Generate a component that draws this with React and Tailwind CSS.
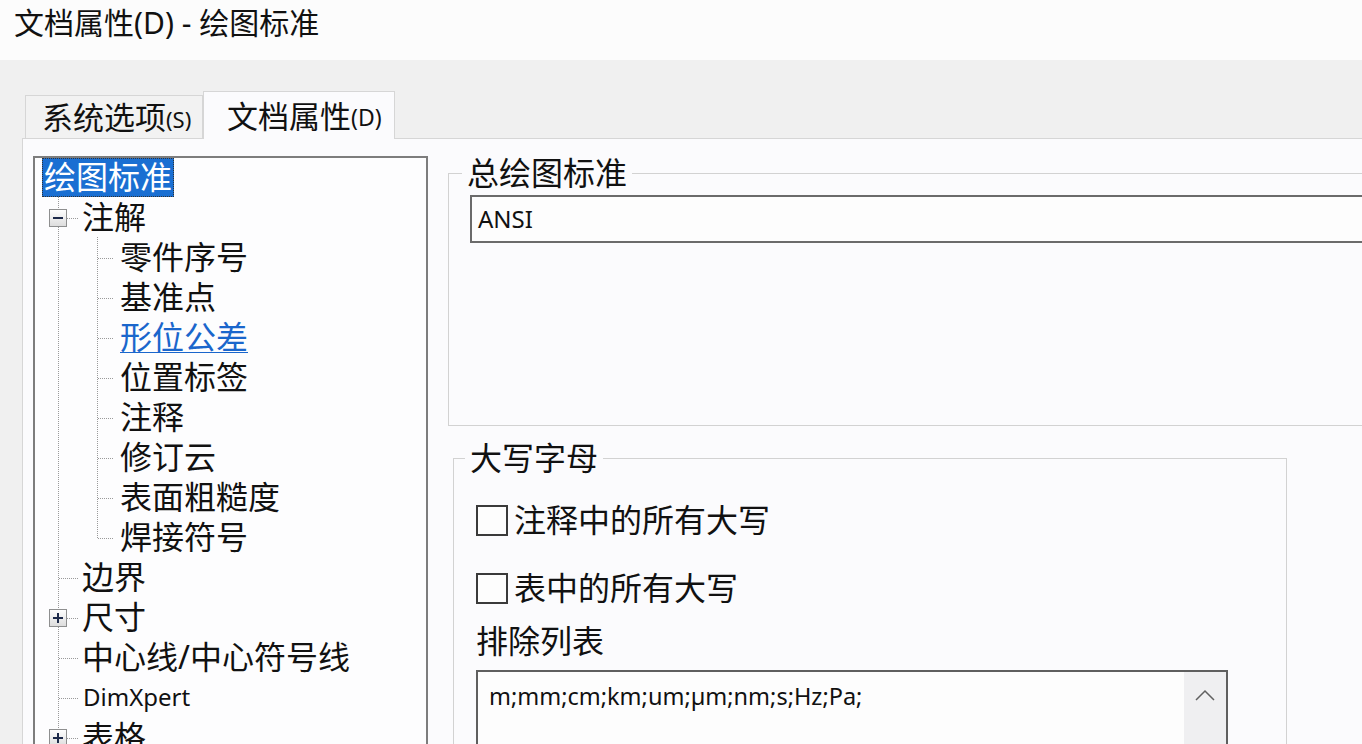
import React from 'react'

const dot = { stroke: '#9a9a9a', strokeWidth: 1, strokeDasharray: '1 1' }

function Expander({ plus }) {
  return (
    <g>
      <defs>
        <linearGradient id="exp" x1="0" y1="0" x2="0" y2="1">
          <stop offset="0" stopColor="#ffffff" />
          <stop offset="1" stopColor="#dcdcdc" />
        </linearGradient>
      </defs>
      <rect x="14.5" y="12.5" width="17" height="17" fill="url(#exp)" stroke="#8e8f8f" />
      <line x1="18" y1="21" x2="28" y2="21" stroke="#1d2a4a" strokeWidth="2" />
      {plus && <line x1="23" y1="16" x2="23" y2="26" stroke="#1d2a4a" strokeWidth="2" />}
    </g>
  )
}

function Prefix({ kind }) {
  if (kind === 'child' || kind === 'last') {
    return (
      <svg width="85" height="40" className="shrink-0">
        <line x1="23.5" y1="0" x2="23.5" y2="40" style={dot} />
        <line x1="62.5" y1="0" x2="62.5" y2={kind === 'last' ? 21 : 40} style={dot} />
        <line x1="63" y1="21.5" x2="78" y2="21.5" style={dot} />
      </svg>
    )
  }
  const box = kind === 'minus' || kind === 'plus'
  return (
    <svg width="47" height="40" className="shrink-0">
      {box ? (
        <>
          <line x1="23.5" y1="0" x2="23.5" y2="12" style={dot} />
          <line x1="23.5" y1="30" x2="23.5" y2="40" style={dot} />
          <line x1="32" y1="21.5" x2="44" y2="21.5" style={dot} />
          <Expander plus={kind === 'plus'} />
        </>
      ) : (
        <>
          <line x1="23.5" y1="0" x2="23.5" y2="40" style={dot} />
          <line x1="24" y1="21.5" x2="44" y2="21.5" style={dot} />
        </>
      )}
    </svg>
  )
}

const rows = [
  { kind: 'minus', text: '注解' },
  { kind: 'child', text: '零件序号' },
  { kind: 'child', text: '基准点' },
  { kind: 'child', text: '形位公差', link: true },
  { kind: 'child', text: '位置标签' },
  { kind: 'child', text: '注释' },
  { kind: 'child', text: '修订云' },
  { kind: 'child', text: '表面粗糙度' },
  { kind: 'last', text: '焊接符号' },
  { kind: 'leaf', text: '边界' },
  { kind: 'plus', text: '尺寸' },
  { kind: 'leaf', text: '中心线/中心符号线' },
  { kind: 'leaf', text: 'DimXpert', small: true },
  { kind: 'plus', text: '表格' },
  { kind: 'leaf', text: '视图' },
]

function Tree() {
  return (
    <div className="mt-[17px] ml-[10px] w-[395px] h-[620px] shrink-0 border-2 border-[#7d7d7d] bg-[#fdfdfe] overflow-hidden">
      <div className="h-[39px] flex items-center pl-[7px]">
        <span className="h-[39px] px-[2px] bg-[#1a6fd2] text-white text-[32px] leading-[38px] outline-1 outline-dotted outline-[#333] -outline-offset-1">
          绘图标准
        </span>
      </div>
      {rows.map((r, i) => (
        <div key={i} className="h-[40px] flex items-start">
          <Prefix kind={r.kind} />
          <span
            className={
              'whitespace-nowrap leading-[40px] ' +
              (r.small ? 'text-[24px] pl-[1px] ' : 'text-[32px] ') +
              (r.link ? 'text-[#1a66cc] underline decoration-1 underline-offset-[3px]' : 'text-[#111]')
            }
          >
            {r.text}
          </span>
        </div>
      ))}
    </div>
  )
}

function Checkbox({ label }) {
  return (
    <div className="h-[40px] flex items-center ml-[11px]">
      <span className="w-[32px] h-[31px] border-2 border-[#3a3a3a] bg-[#fdfdfd] shrink-0" />
      <span className="ml-[6px] text-[32px] leading-[40px] text-[#111] whitespace-nowrap">{label}</span>
    </div>
  )
}

export default function App() {
  return (
    <div className="w-[1362px] h-[744px] overflow-hidden bg-[#f0f0f0] flex flex-col font-['Noto_Sans','Noto_Sans_CJK_SC',sans-serif] text-[#111]">
      <div className="h-[60px] shrink-0 bg-[#fcfcfc] pl-[14px] pt-[4px]">
        <span className="text-[30px] leading-[38px] whitespace-nowrap">文档属性(D) - 绘图标准</span>
      </div>

      <div className="h-[78px] shrink-0 flex items-end pl-[25px]">
        <div className="w-[178px] h-[43px] border border-b-0 border-[#d6d6d6] bg-[#f2f2f2] flex items-center pl-[16px] whitespace-nowrap">
          <span className="text-[31px] leading-[40px]">系统选项</span>
          <span className="text-[22px] leading-[40px] pt-[4px]">(S)</span>
        </div>
        <div className="w-[192px] h-[48px] -mb-px relative border border-b-0 border-[#d6d6d6] bg-[#fbfbfd] flex items-center pl-[23px] whitespace-nowrap">
          <span className="text-[31px] leading-[40px]">文档属性</span>
          <span className="text-[23px] leading-[40px] pt-[3px]">(D)</span>
        </div>
      </div>

      <div className="flex-1 ml-[22px] border-l border-t border-[#d6d6d6] bg-[#fbfbfd] flex items-start">
        <Tree />

        <div className="ml-[20px] mt-[14px] flex flex-col shrink-0">
          <fieldset className="w-[940px] h-[273px] border border-[#d2d2d2] pl-[13px] shrink-0">
            <legend className="px-[5px] text-[32px] leading-[40px] whitespace-nowrap">总绘图标准</legend>
            <div className="ml-[8px] mt-[2px] w-[920px] h-[48px] border-2 border-[#6b6b6b] bg-[#fdfdfd] flex items-center pl-[6px]">
              <span className="text-[24px] leading-[30px]">ANSI</span>
            </div>
          </fieldset>

          <fieldset className="ml-[5px] mt-[12px] w-[834px] h-[330px] border border-[#d2d2d2] pl-[11px] shrink-0">
            <legend className="px-[5px] text-[32px] leading-[40px] whitespace-nowrap">大写字母</legend>
            <div className="mt-[22px]">
              <Checkbox label="注释中的所有大写" />
            </div>
            <div className="mt-[28px]">
              <Checkbox label="表中的所有大写" />
            </div>
            <div className="mt-[13px] ml-[11px] h-[40px] text-[32px] leading-[40px]">排除列表</div>
            <div className="mt-[9px] ml-[11px] w-[752px] h-[120px] border-2 border-[#5f5f5f] bg-[#fdfdfd] flex">
              <div className="flex-1 pl-[11px] pt-[8px] text-[23.5px] leading-[32px] whitespace-nowrap">
                m;mm;cm;km;um;µm;nm;s;Hz;Pa;
              </div>
              <div className="w-[42px] bg-[#efeff1] flex justify-center pt-[17px]">
                <svg width="20" height="12" viewBox="0 0 20 12">
                  <polyline points="1,11 10,2 19,11" fill="none" stroke="#606060" strokeWidth="1.5" />
                </svg>
              </div>
            </div>
          </fieldset>
        </div>
      </div>
    </div>
  )
}
